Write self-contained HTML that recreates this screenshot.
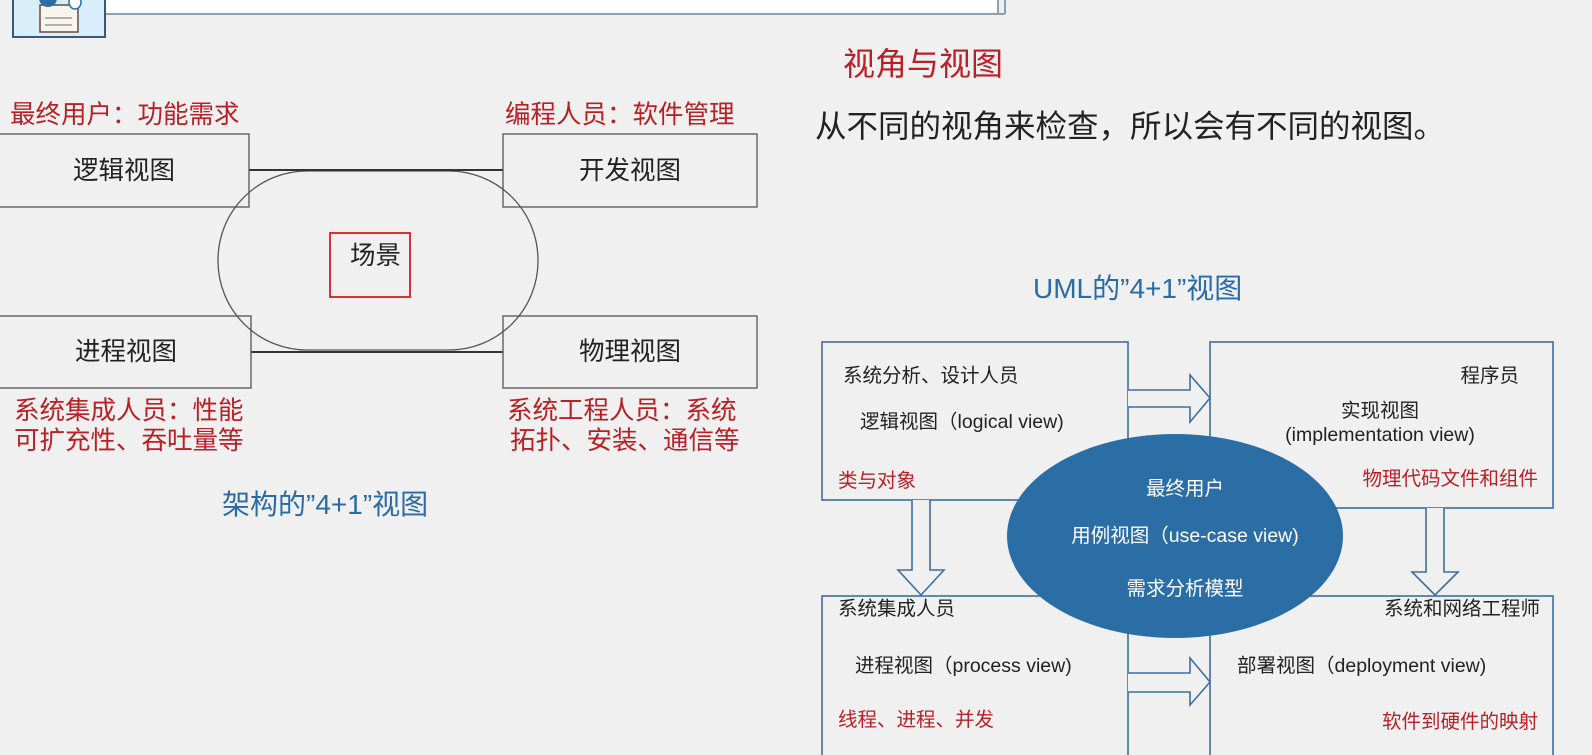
<!DOCTYPE html>
<html><head><meta charset="utf-8"><style>
html,body{margin:0;padding:0;background:#f0f0f0;}
svg{display:block;font-family:"Liberation Sans","Noto Sans CJK SC",sans-serif;}
</style></head><body>
<svg width="1592" height="755" viewBox="0 0 1592 755">
<rect width="1592" height="755" fill="#f0f0f0"/>
<rect x="105" y="-5" width="893" height="19" fill="#fff" stroke="#8aa0b8" stroke-width="2"/>
<line x1="105" y1="14" x2="1005" y2="14" stroke="#8aa0b8" stroke-width="2"/>
<line x1="1005" y1="-2" x2="1005" y2="14" stroke="#8aa0b8" stroke-width="2"/>
<rect x="13" y="-5" width="92" height="42" fill="#d8eefa" stroke="#3a5878" stroke-width="2"/>
<rect x="40" y="5" width="38" height="27" fill="#f8f4ee" stroke="#6a4a40" stroke-width="1.5"/>
<line x1="45" y1="18" x2="72" y2="18" stroke="#999" stroke-width="1.5"/>
<line x1="45" y1="25" x2="72" y2="25" stroke="#999" stroke-width="1.5"/>
<circle cx="48" cy="-2" r="9" fill="#2a6ea5"/>
<ellipse cx="75" cy="2" rx="6" ry="7" fill="#fff" stroke="#2a6ea5" stroke-width="1.5"/>

<g font-size="25.5">
<text x="10" y="123" fill="#b82025">最终用户：功能需求</text>
<text x="505" y="123" fill="#b82025">编程人员：软件管理</text>
<rect x="218" y="171" width="320" height="179" rx="89" fill="none" stroke="#555" stroke-width="1.3"/>
<line x1="249" y1="170" x2="503" y2="170" stroke="#333" stroke-width="2"/>
<line x1="251" y1="352" x2="503" y2="352" stroke="#333" stroke-width="2"/>
<rect x="-2" y="134" width="251" height="73" fill="none" stroke="#555" stroke-width="1.3"/>
<rect x="503" y="134" width="254" height="73" fill="none" stroke="#555" stroke-width="1.3"/>
<rect x="-2" y="316" width="253" height="72" fill="none" stroke="#555" stroke-width="1.3"/>
<rect x="503" y="316" width="254" height="72" fill="none" stroke="#555" stroke-width="1.3"/>
<text x="124" y="179" text-anchor="middle" fill="#222">逻辑视图</text>
<text x="630" y="179" text-anchor="middle" fill="#222">开发视图</text>
<text x="126" y="360" text-anchor="middle" fill="#222">进程视图</text>
<text x="630" y="360" text-anchor="middle" fill="#222">物理视图</text>
<rect x="330" y="233" width="80" height="64" fill="none" stroke="#d42020" stroke-width="1.8"/>
<text x="350" y="264" fill="#222">场景</text>
<text x="14" y="419" fill="#b82025">系统集成人员：性能</text>
<text x="14" y="449" fill="#b82025">可扩充性、吞吐量等</text>
<text x="507" y="419" fill="#b82025">系统工程人员：系统</text>
<text x="510" y="449" fill="#b82025">拓扑、安装、通信等</text>
<text x="222" y="514" fill="#2a6aa5" font-size="28">架构的”4+1”视图</text>
</g>

<text x="843" y="75" fill="#b82025" font-size="32">视角与视图</text>
<text x="815" y="137" fill="#222" font-size="31.5">从不同的视角来检查，所以会有不同的视图。</text>
<text x="1033" y="298" fill="#2a6aa5" font-size="28">UML的”4+1”视图</text>

<g fill="none" stroke="#3f6fa0" stroke-width="1.6">
<rect x="822" y="342" width="306" height="158"/>
<rect x="1210" y="342" width="343" height="166"/>
<rect x="822" y="596" width="306" height="165"/>
<rect x="1210" y="596" width="343" height="165"/>
<path d="M1128,390 H1190 V375 L1210,398 L1190,422 V407 H1128" fill="#f0f0f0"/>
<path d="M1128,673 H1190 V658 L1210,682 L1190,705 V692 H1128" fill="#f0f0f0"/>
<path d="M912,500 V570 H898 L921,595 L944,570 H930 V500" fill="#f0f0f0"/>
<path d="M1426,508 V572 H1412 L1435,595 L1458,572 H1444 V508" fill="#f0f0f0"/>
</g>
<ellipse cx="1175" cy="536" rx="168" ry="102" fill="#2a6ea5"/>
<g font-size="19.5" fill="#222">
<text x="843" y="382">系统分析、设计人员</text>
<text x="860" y="428">逻辑视图（logical view)</text>
<text x="838" y="487" fill="#b82025">类与对象</text>
<text x="1519" y="382" text-anchor="end">程序员</text>
<text x="1380" y="417" text-anchor="middle">实现视图</text>
<text x="1380" y="441" text-anchor="middle">(implementation view)</text>
<text x="1538" y="485" text-anchor="end" fill="#b82025">物理代码文件和组件</text>
<text x="1185" y="495" text-anchor="middle" fill="#fff">最终用户</text>
<text x="1185" y="542" text-anchor="middle" fill="#fff">用例视图（use-case view)</text>
<text x="1185" y="595" text-anchor="middle" fill="#fff">需求分析模型</text>
<text x="838" y="615">系统集成人员</text>
<text x="855" y="672">进程视图（process view)</text>
<text x="838" y="726" fill="#b82025">线程、进程、并发</text>
<text x="1540" y="615" text-anchor="end">系统和网络工程师</text>
<text x="1237" y="672">部署视图（deployment view)</text>
<text x="1538" y="728" text-anchor="end" fill="#b82025">软件到硬件的映射</text>
</g>
</svg>
</body></html>
